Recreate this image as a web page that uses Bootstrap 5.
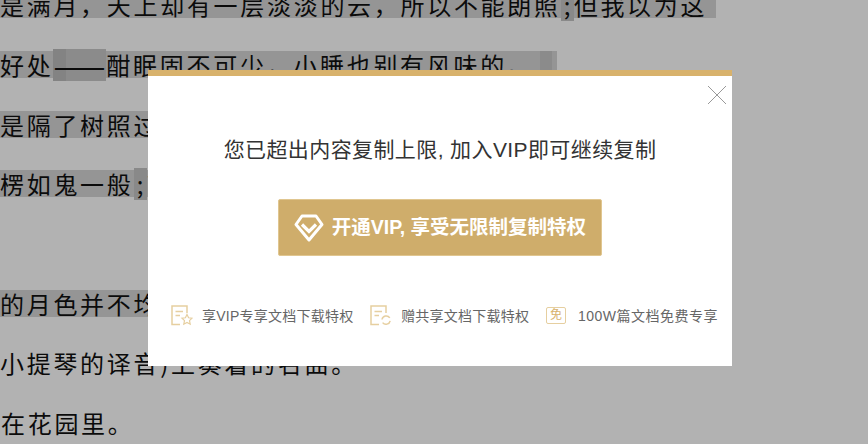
<!DOCTYPE html>
<html lang="zh-CN">
<head>
<meta charset="utf-8">
<title>VIP</title>
<link rel="stylesheet" href="https://cdn.jsdelivr.net/npm/bootstrap@5.3.0/dist/css/bootstrap.min.css">
<style>
html,body{height:444px;overflow:hidden;background:#fff}
body{font-family:"Liberation Sans","Noto Sans CJK SC",sans-serif;color:#111}
.doc-text{margin-top:-25px;font-size:24px;letter-spacing:2.7px;font-family:"Noto Sans CJK SC",sans-serif;color:#111;white-space:nowrap}
.doc-line{height:59.7px;display:flex;align-items:center}
.hl{display:inline-flex;align-items:center;height:27px;line-height:29px;background:#d6d6d6}
.spot{display:inline-block;height:32px;line-height:32px;background:#c4c4c4}
.spot-semi{width:13px;letter-spacing:0;text-align:center}
.spot-dash{width:53px;font-size:31px;line-height:31px;overflow:hidden;background:linear-gradient(90deg,#bcbcbc 13px,#c8c8c8 13px)}
.spot-end{width:12px;height:27px;margin-left:6px;background:#c8c8c8}
.w1{width:716px}.w2{width:557px}.w3{width:300px}
.ind{padding-left:1px}
.veil{position:fixed;inset:0;background:rgba(0,0,0,.3)}
.vip-box{position:absolute;left:148px;top:70px;width:584px;height:296px;background:#fff;border-top:6px solid #d8b26c}
.vip-close{position:absolute;right:5px;top:9px;width:20px;height:20px;padding:0;border:0;background:none}
.vip-title{font-size:21px;line-height:28px;margin-top:60px;color:#333;letter-spacing:.4px}
.vip-btn{width:324px;height:57px;margin-top:35px;background:#cfad6b;border:1px solid #e0c690;border-radius:2px;color:#fff;font-size:19.5px;font-weight:700;gap:8px}
.vip-btn:hover{background:#cfad6b;color:#fff}
.perks{margin-top:49px;padding:0 14px 0 23px;font-size:14px;letter-spacing:.25px;line-height:20px;color:#666}
.perk{gap:9px}
.perk-free{gap:12px;letter-spacing:.5px}
.free-ic{width:20px;height:17px;border:1.5px solid #e6cfa0;border-radius:2px;color:#d8b26c;font-size:12px;line-height:14px;text-align:center;letter-spacing:0}
</style>
</head>
<body>
<div class="doc-text">
  <div class="doc-line"><span class="hl w1">是满月，天上却有一层淡淡的云，所以不能朗照<span class="spot spot-semi">;</span>但我以为这</span></div>
  <div class="doc-line"><span class="hl w2">好处<span class="spot spot-dash">——</span>酣眠固不可少，小睡也别有风味的。<span class="spot spot-end"></span></span></div>
  <div class="doc-line"><span class="hl w3">是隔了树照过来</span></div>
  <div class="doc-line"><span class="hl w3">楞如鬼一般<span class="spot spot-semi">;</span>弯弯</span></div>
  <div class="doc-line"></div>
  <div class="doc-line"><span class="hl w3">的月色并不均匀</span></div>
  <div class="doc-line">小提琴的译音)上奏着的名曲。</div>
  <div class="doc-line ind">在花园里。</div>
</div>
<div class="veil"></div>
<div class="vip-box d-flex flex-column align-items-center">
  <button type="button" class="vip-close" aria-label="关闭">
    <svg class="d-block" width="20" height="20" viewBox="0 0 20 20"><path d="M1 1 19 19M19 1 1 19" stroke="#999" stroke-width="1" fill="none"/></svg>
  </button>
  <div class="vip-title">您已超出内容复制上限, 加入VIP即可继续复制</div>
  <button type="button" class="btn vip-btn d-flex align-items-center justify-content-center p-0">
    <svg width="30" height="30" viewBox="0 0 30 30"><path d="M8 3H22L28 11.5 15 27 2 11.5Z" fill="none" stroke="#fff" stroke-width="3" stroke-linejoin="round"/><path d="M8 11.5 15 18.5 22 11.5" fill="none" stroke="#fff" stroke-width="3.2"/></svg>
    <span>开通VIP, 享受无限制复制特权</span>
  </button>
  <div class="perks d-flex justify-content-between w-100">
    <div class="perk d-flex align-items-center">
      <svg width="22" height="21" viewBox="0 0 22 21"><path d="M9 19.5H1V1H16V8M4.5 6.5H12M4.5 10.5H9" fill="none" stroke="#e6cfa0" stroke-width="1.5"/><path d="M16 9.5 17.6 12.8 21 13.2 18.5 15.6 19.2 19.2 16 17.4 12.8 19.2 13.5 15.6 11 13.2 14.4 12.8Z" fill="none" stroke="#e6cfa0" stroke-width="1.2"/></svg>
      <span>享VIP专享文档下载特权</span>
    </div>
    <div class="perk d-flex align-items-center">
      <svg width="22" height="21" viewBox="0 0 22 21"><path d="M9 19.5H1V1H16V8M4.5 6.5H12M4.5 10.5H9" fill="none" stroke="#e6cfa0" stroke-width="1.5"/><path d="M12 14.5A4.3 4.3 0 0 1 19.8 12.8M20.2 15.8A4.3 4.3 0 0 1 12.6 17.6" fill="none" stroke="#e6cfa0" stroke-width="1.5"/></svg>
      <span>赠共享文档下载特权</span>
    </div>
    <div class="perk perk-free d-flex align-items-center">
      <div class="free-ic">免</div>
      <span>100W篇文档免费专享</span>
    </div>
  </div>
</div>
<script src="https://cdn.jsdelivr.net/npm/bootstrap@5.3.0/dist/js/bootstrap.bundle.min.js"></script>
</body>
</html>
